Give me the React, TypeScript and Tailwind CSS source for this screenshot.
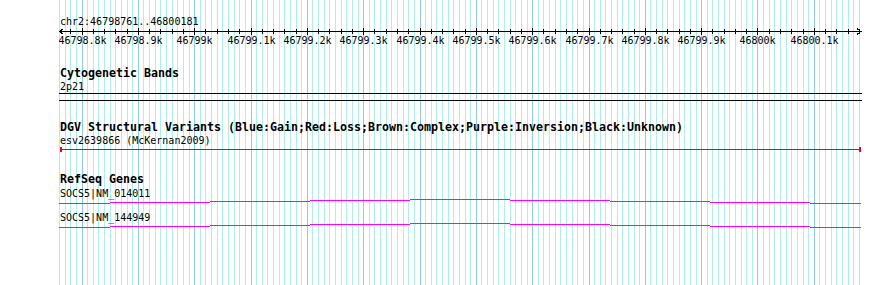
import React from "react";

const X0 = 59.5;
const STEP = 5.633;
const LEFT = 59;
const gx = (i: number) => Math.floor(X0 + STEP * i);

const labels = [
  "46798.8k",
  "46798.9k",
  "46799k",
  "46799.1k",
  "46799.2k",
  "46799.3k",
  "46799.4k",
  "46799.5k",
  "46799.6k",
  "46799.7k",
  "46799.8k",
  "46799.9k",
  "46800k",
  "46800.1k",
];

// intron "hat" drawn as stepped segments, y relative to the top of the strip
const hat: [number, number, number][] = [
  [59, 110, 4],
  [110, 210, 3],
  [210, 310, 2],
  [310, 410, 1],
  [410, 510, 0],
  [510, 610, 1],
  [610, 710, 2],
  [710, 810, 3],
  [810, 861, 4],
];

function Grid() {
  return (
    <svg className="absolute inset-0" width={890} height={285} shapeRendering="crispEdges">
      {Array.from({ length: 143 }, (_, i) => (
        <rect key={i} x={gx(i)} y={0} width={1} height={285} fill={i % 10 === 4 ? "#8ccbef" : "#aeeeee"} />
      ))}
    </svg>
  );
}

function Ruler() {
  return (
    <svg width={803} height={20} className="block" shapeRendering="crispEdges">
      <rect x={0} y={3} width={803} height={1} fill="#000" />
      {Array.from({ length: 72 }, (_, k) => {
        const i = k * 2;
        const major = i % 10 === 4;
        const x = gx(i) - LEFT;
        if (i === 0) return null;
        return <rect key={i} x={x} y={major ? 0 : 1} width={1} height={major ? 7 : 5} fill="#000" />;
      })}
      <path d="M0.5 3.5 L4.5 0.5 M0.5 3.5 L4.5 6.5" stroke="#000" strokeWidth={1} fill="none" />
      <path d="M802 3.5 L798 0.5 M802 3.5 L798 6.5" stroke="#000" strokeWidth={1} fill="none" />
      {labels.map((l, j) => (
        <text
          key={l}
          x={gx(4 + j * 10) - LEFT + 0.5}
          y={16}
          textAnchor="middle"
          fontSize={10}
          fontFamily="'DejaVu Sans Mono', monospace"
          fill="#000"
        >
          {l}
        </text>
      ))}
    </svg>
  );
}

function Hat() {
  return (
    <svg width={803} height={5} className="block" shapeRendering="crispEdges">
      {hat.map(([a, b, y]) => (
        <rect key={a} x={a - LEFT} y={y} width={b - a} height={1} fill="#ff00ff" />
      ))}
    </svg>
  );
}

export default function App() {
  return (
    <div className="relative h-[285px] w-[890px] overflow-hidden bg-white font-['DejaVu_Sans_Mono',monospace] text-black">
      <Grid />
      <div className="relative flex flex-col pl-[59px] pt-[15px]">
        <div className="h-[13px] pl-px text-[10px] leading-[13px]">chr2:46798761..46800181</div>
        <Ruler />

        <div className="mt-[19px] h-[13px] pl-px text-[11.63px] font-bold leading-[13px]">Cytogenetic Bands</div>
        <div className="h-[13px] pl-px text-[10px] leading-[13px]">2p21</div>
        <svg width={803} height={8} className="block" shapeRendering="crispEdges">
          <rect x={0} y={0} width={803} height={1} fill="#000" />
          <rect x={0} y={7} width={803} height={1} fill="#000" />
        </svg>

        <div className="mt-[20px] h-[13px] pl-px text-[11.63px] font-bold leading-[13px]">
          DGV Structural Variants (Blue:Gain;Red:Loss;Brown:Complex;Purple:Inversion;Black:Unknown)
        </div>
        <div className="h-[13px] pl-px text-[10px] leading-[13px]">esv2639866 (McKernan2009)</div>
        <svg width={803} height={6} className="block" shapeRendering="crispEdges">
          <rect x={1} y={2} width={801} height={1} fill="#ff0000" />
          <rect x={1} y={0} width={2} height={5} fill="#ff0000" />
          <rect x={800} y={0} width={2} height={5} fill="#ff0000" />
        </svg>

        <div className="mt-[20px] h-[13px] pl-px text-[11.63px] font-bold leading-[13px]">RefSeq Genes</div>
        <div className="mt-px h-[12px] pl-px text-[10px] leading-[13px]">SOCS5|NM_014011</div>
        <Hat />
        <div className="mt-[7px] h-[12px] pl-px text-[10px] leading-[13px]">SOCS5|NM_144949</div>
        <Hat />
      </div>
    </div>
  );
}
